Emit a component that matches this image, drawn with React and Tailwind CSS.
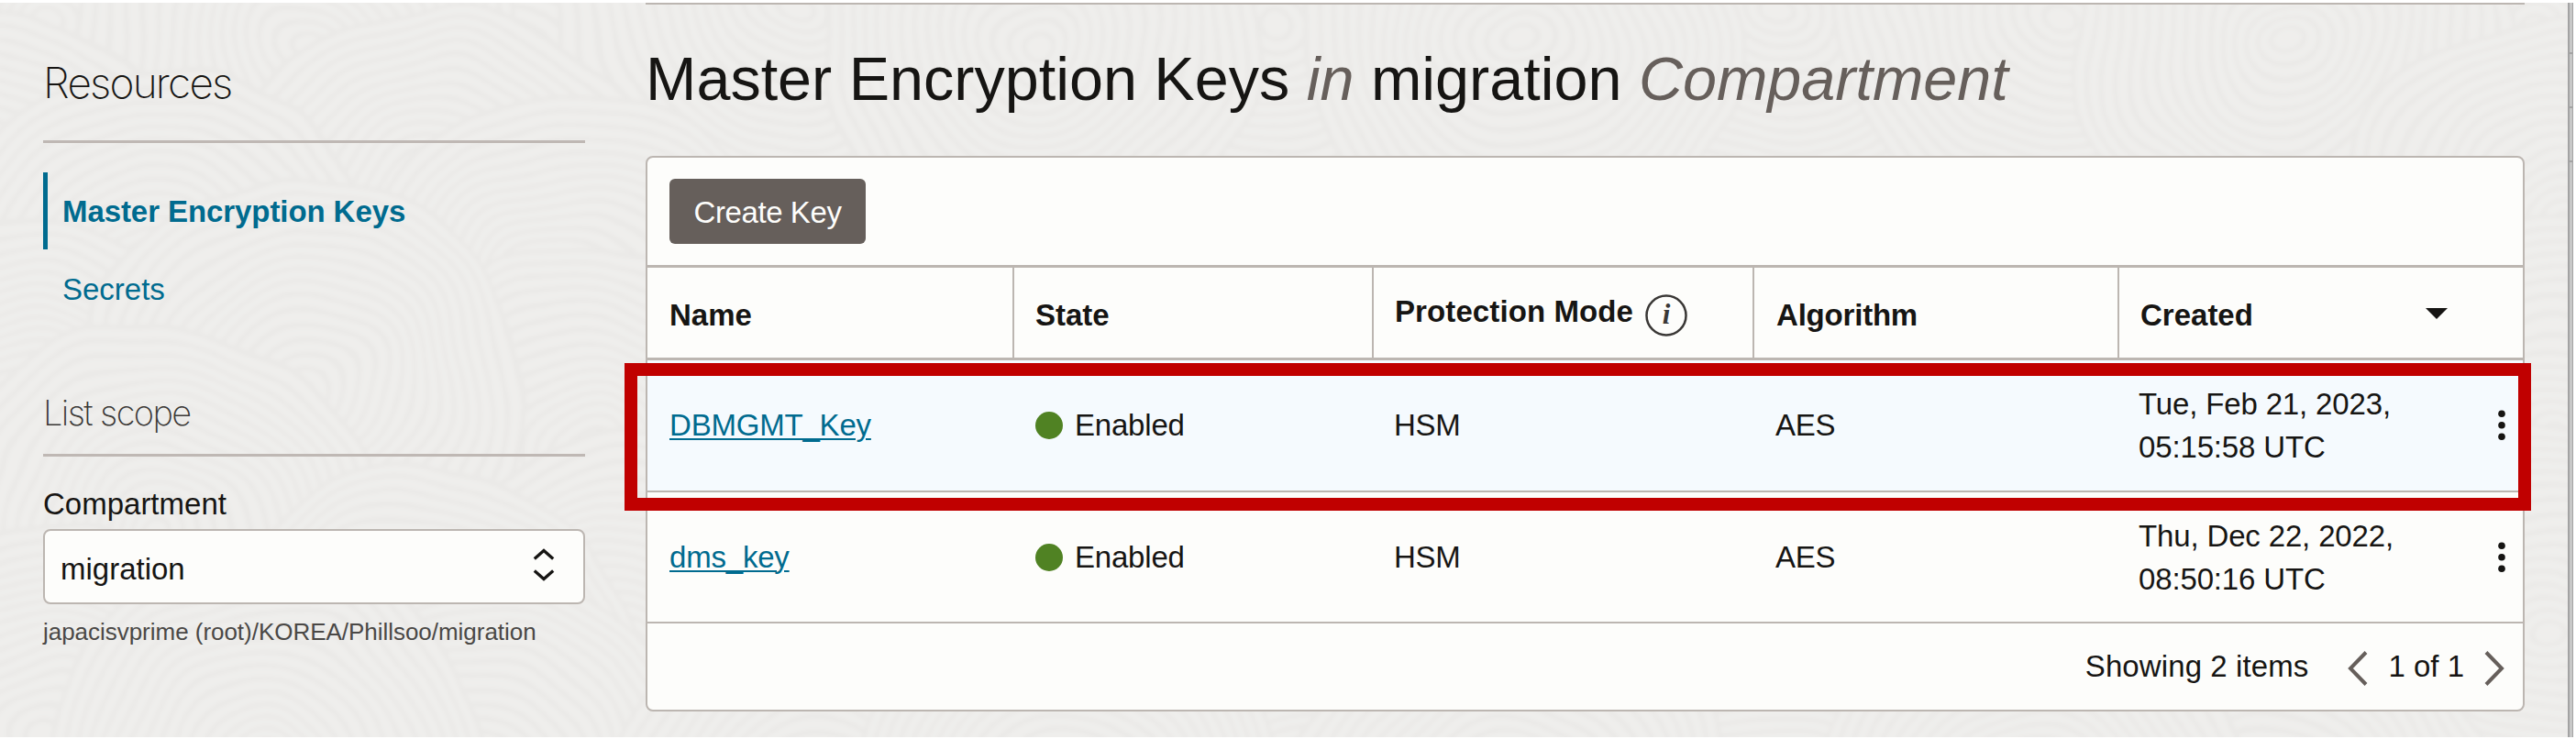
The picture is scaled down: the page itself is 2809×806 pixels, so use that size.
import React from "react";

const RING_RADII = [16, 31, 46, 61, 76, 91, 106, 121, 136, 151, 166, 181, 196, 211, 226, 241];
const WELLS = [
  [60, 20], [560, 90], [860, 0], [1390, 20], [1940, 10], [2240, 10], [2760, 30],
  [330, 50], [1130, 40], [1660, 40], [2500, 50],
  [-20, 240], [480, 230], [2800, 250], [620, 330], [170, 305],
  [20, 470], [2790, 470], [640, 500], [330, 420],
  [180, 580], [2780, 690], [690, 700], [460, 740],
  [40, 800], [520, 850], [900, 880], [1450, 880], [1930, 880], [2480, 880], [290, 830], [1170, 870], [1650, 880], [2220, 870],
];

function Backdrop() {
  return (
    <svg className="absolute inset-0" width="2809" height="806" aria-hidden="true">
      <filter id="grain" x="0" y="0" width="100%" height="100%">
        <feTurbulence type="fractalNoise" baseFrequency="0.006" numOctaves="2" seed="4" result="n" />
        <feDisplacementMap in="SourceGraphic" in2="n" scale="50" xChannelSelector="R" yChannelSelector="G" />
        <feGaussianBlur stdDeviation="2" />
      </filter>
      <rect width="2809" height="806" fill="#efeeec" />
      <g filter="url(#grain)" stroke="#eae9e7" strokeWidth="5">
        {WELLS.map(([x, y], i) => (
          <g key={i}>
            {[...RING_RADII].reverse().map((r) => (
              <ellipse key={r} cx={x} cy={y} rx={r} ry={r * 0.95} fill="#efeeec" />
            ))}
          </g>
        ))}
      </g>
    </svg>
  );
}

function Kebab() {
  return (
    <svg width="8" height="34" viewBox="0 0 8 34" fill="#161513">
      <circle cx="4" cy="4.3" r="3.8" />
      <circle cx="4" cy="16.7" r="3.8" />
      <circle cx="4" cy="29.2" r="3.8" />
    </svg>
  );
}

const GRID = "grid grid-cols-[400px_392px_415px_398px_1fr]";

function KeyRow({ name, date, time, tint }) {
  return (
    <div className={`${GRID} h-[143.5px] border-b-[2.5px] border-[#bcb6b1] ${tint}`}>
      <div className="pl-6 pt-[52px]">
        <a className="tracking-[-0.2px] text-[#006b8f] underline decoration-2 underline-offset-[3px]">{name}</a>
      </div>
      <div className="flex items-start gap-[13px] pl-[23px] pt-[52px]">
        <span className="mt-[4px] size-[30px] rounded-full bg-[#508223]" />
        <span className="tracking-[-0.2px]">Enabled</span>
      </div>
      <div className="pl-[22px] pt-[52px] tracking-[-0.3px]">HSM</div>
      <div className="pl-[23px] pt-[52px] tracking-[-0.3px]">AES</div>
      <div className="flex justify-between pl-[21px] pr-[19px]">
        <div className="pt-[24px] leading-[47px] tracking-[-0.15px]">
          <div>{date}</div>
          <div>{time}</div>
        </div>
        <div className="pt-[54px]">
          <Kebab />
        </div>
      </div>
    </div>
  );
}

export default function App() {
  return (
    <div className="relative h-[806px] w-[2809px] overflow-hidden bg-white py-[3px] font-['Liberation_Sans',Arial,sans-serif] text-[33px] leading-[37px] text-[#161513]">
      <div className="relative flex h-[801px] w-[2806px] overflow-hidden bg-[#efeeec]">
        <Backdrop />
        <aside className="relative ml-[47px] w-[591px]">
          <h2 className="mt-[59px] font-[Inter] text-[46px] font-extralight leading-[56px] tracking-[-1.8px]">Resources</h2>
          <div className="mt-[35px] h-[3px] bg-[#bfb8b4]" />
          <nav className="mt-8 text-[#006b8f]">
            <div className="flex h-[84px] items-center border-l-[5px] border-[#006b8f] pl-[16px] font-bold tracking-[-0.08px]">Master Encryption Keys</div>
            <div className="flex h-[84px] items-center pl-[21px] pt-[2px]">Secrets</div>
          </nav>
          <h3 className="mt-[71px] font-[Inter] text-[38px] font-extralight leading-[46px] tracking-[-1.6px] text-[#3a3836]">List scope</h3>
          <div className="mt-[22px] h-[2.5px] bg-[#bfb8b4]" />
          <div className="mt-[33px]">Compartment</div>
          <div className="mt-[9px] flex h-[82px] items-center justify-between rounded-lg border-2 border-[#bcb6b1] bg-[#fdfdfb] pl-[17px] pr-[31px]">
            <span className="pt-[5px]">migration</span>
            <svg className="mb-[3px]" width="24" height="36" viewBox="0 0 24 36" fill="none" stroke="#161513" strokeWidth="3.3">
              <path d="M1.800 11.500 12 2.500l10.200 9M1.800 24.500 12 33.500l10.200-9" />
            </svg>
          </div>
          <div className="mt-[15px] text-[26px] leading-[30px] tracking-[-0.03px] text-[#4a4846]">japacisvprime (root)/KOREA/Phillsoo/migration</div>
        </aside>

        <main className="relative ml-[66px] w-[2049px] border-t-2 border-[#bcb6b1]">
          <h1 className="mt-[44px] whitespace-nowrap text-[66.5px] leading-[74px]">
            Master Encryption Keys <i className="text-[#665f5b]">in</i> migration <i className="text-[#665f5b]">Compartment</i>
          </h1>
          <section className="mt-[47px] h-[606px] rounded-lg border-2 border-[#bcb6b1] bg-[#fdfdfb]">
            <div className="h-[120px] border-b-[3px] border-[#bcb6b1] pl-6 pt-[23px]">
              <button className="h-[71px] w-[214px] rounded-md bg-[#665f5b] pt-[2px] tracking-[-0.4px] text-[#fdfdfb]">Create Key</button>
            </div>
            <div className={`${GRID} h-[101px] border-b-[3px] border-[#bcb6b1] font-bold`}>
              <div className="flex items-center border-r-2 border-[#bcb6b1] pl-6 pt-[5px]">Name</div>
              <div className="flex items-center border-r-2 border-[#bcb6b1] pl-[23px] pt-[5px]">State</div>
              <div className="flex items-center gap-[13px] border-r-2 border-[#bcb6b1] pl-[23px] pt-[5px]">
                <span className="-mt-2 tracking-[0.1px]">Protection Mode</span>
                <svg width="46" height="46" viewBox="0 0 46 46">
                  <circle cx="23" cy="23" r="21.500" fill="none" stroke="#3a3836" strokeWidth="2.500" />
                  <text x="23" y="32" textAnchor="middle" fontFamily="Liberation Serif" fontStyle="italic" fontSize="31" fontWeight="bold" fill="#3a3836">i</text>
                </svg>
              </div>
              <div className="flex items-center border-r-2 border-[#bcb6b1] pl-6 pt-[5px] tracking-[-0.2px]">Algorithm</div>
              <div className="flex items-center justify-between pl-[23px] pr-[82px] pt-[5px]">
                <span>Created</span>
                <svg className="mb-[3px]" width="24" height="12" viewBox="0 0 24 12"><path d="M0 0h24L12 12z" fill="#161513" /></svg>
              </div>
            </div>
            <KeyRow name="DBMGMT_Key" date="Tue, Feb 21, 2023," time="05:15:58 UTC" tint="bg-[#f5fafe]" />
            <KeyRow name="dms_key" date="Thu, Dec 22, 2022," time="08:50:16 UTC" tint="bg-transparent" />
            <div className="flex h-[93px] items-center justify-end pr-[20px]">
              <span className="tracking-[0.1px]">Showing 2 items</span>
              <svg className="ml-[43px] mt-[5px]" width="22" height="38" viewBox="0 0 22 38" fill="none" stroke="#665f5b" strokeWidth="4"><path d="M20 1.500 3 19l17 17.500" /></svg>
              <span className="ml-[22px] mr-[22px]">1 of 1</span>
              <svg className="mt-[5px]" width="22" height="38" viewBox="0 0 22 38" fill="none" stroke="#665f5b" strokeWidth="4"><path d="M2 1.500 19 19 2 36.500" /></svg>
            </div>
          </section>
        </main>

        <div className="relative ml-auto w-[6px] border-l-2 border-r border-[#a3a3a3] bg-[#c8c8c8]">
          <div className="mt-[54px] h-[2px] bg-[#a3a3a3]" />
          <div className="mt-[57px] h-[2px] bg-[#a3a3a3]" />
          <div className="mt-[57px] h-[2px] bg-[#a3a3a3]" />
        </div>
      </div>
      <div className="absolute left-[681px] top-[396px] h-[161px] w-[2079px] border-[14px] border-[#c00000]" />
    </div>
  );
}
